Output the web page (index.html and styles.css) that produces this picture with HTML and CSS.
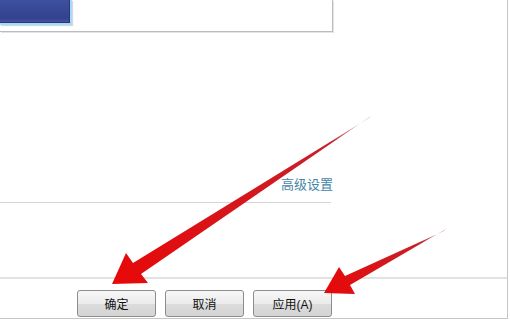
FILE: index.html
```html
<!DOCTYPE html>
<html lang="zh-CN">
<head>
    <meta charset="UTF-8">
    <meta name="viewport" content="width=device-width, initial-scale=1.0">
    <title>显示设置</title>
    <link rel="stylesheet" href="styles.css">
</head>
<body>
    <div class="window">
        <div class="main">
            <div class="preview">
                <div class="monitor"></div>
            </div>
            <div class="link-row">
                <a href="#" class="advanced">高级设置</a>
            </div>
            <div class="divider"></div>
        </div>
        <div class="footer">
            <button type="button" class="btn">确定</button>
            <button type="button" class="btn">取消</button>
            <button type="button" class="btn">应用(A)</button>
        </div>
    </div>

    <!-- red arrows drawn over the dialog -->
    <svg class="arrows" width="510" height="320" viewBox="0 0 510 320">
        <defs>
            <linearGradient id="a1" gradientUnits="userSpaceOnUse" x1="370" y1="117" x2="113" y2="283">
                <stop offset="0" stop-color="#a04858" stop-opacity="0.4"/>
                <stop offset="0.15" stop-color="#c8202a"/>
                <stop offset="1" stop-color="#e80808"/>
            </linearGradient>
            <linearGradient id="a2" gradientUnits="userSpaceOnUse" x1="445" y1="230" x2="325" y2="292">
                <stop offset="0" stop-color="#a04858" stop-opacity="0.4"/>
                <stop offset="0.2" stop-color="#c8202a"/>
                <stop offset="1" stop-color="#e80808"/>
            </linearGradient>
        </defs>
        <polygon fill="url(#a1)" points="371,116 141,274 148,283 112,284 126,253 133,263 369,118"/>
        <polygon fill="url(#a2)" points="446,229 350,285 355,294 324,293 339,267 345,276 444,231"/>
    </svg>
</body>
</html>
```

FILE: styles.css
```css
/* Dialog */
body {
    margin: 0;
    padding: 0;
    background-color: #ffffff;
    font-family: "Liberation Sans", "Noto Sans CJK SC", sans-serif;
    position: relative;
    width: 510px;
    height: 320px;
    overflow: hidden;
}

.window {
    width: 507px;
    height: 318px;
    border-right: 1px solid #c6c6c6;
    border-bottom: 1px solid #c6c6c6;
    display: flex;
    flex-direction: column;
}

.main {
    height: 277px;
}

.preview {
    width: 332px;
    height: 31px;
    border-right: 1px solid #bcbcbc;
    border-bottom: 1px solid #bcbcbc;
    box-shadow: 1px 1px 0 #e4e4e4;
}

.monitor {
    width: 70px;
    height: 23px;
    border-right: 2px solid #a9dbf6;
    border-bottom: 2px solid #a9dbf6;
    background: linear-gradient(#3e50a0, #34428e 80%, #4b5aa6);
    box-shadow: inset -1px -1px 0 #2b3679, 1px 1px 1px #d0d8e4;
}

.link-row {
    width: 333px;
    margin-top: 143px;
    text-align: right;
    line-height: 18px;
}

.advanced {
    font-size: 13px;
    color: #4586a8;
    text-decoration: none;
}

.divider {
    width: 331px;
    height: 1px;
    margin-top: 8px;
    background-color: #d6d6d6;
}

.footer {
    flex: 1;
    border-top: 2px solid #e2e2e2;
    display: flex;
    align-items: flex-start;
    gap: 9px;
    padding: 11px 0 0 77px;
}

.btn {
    width: 79px;
    height: 27px;
    padding: 0;
    border: 1px solid #8c8c8c;
    border-radius: 3px;
    background: linear-gradient(#f7f7f7, #ebebeb 50%, #dcdcdc 51%, #d4d4d4);
    font-family: "Liberation Sans", "Noto Sans CJK SC", sans-serif;
    font-size: 12px;
    color: #111111;
}

.arrows {
    position: absolute;
    left: 0;
    top: 0;
}
```
